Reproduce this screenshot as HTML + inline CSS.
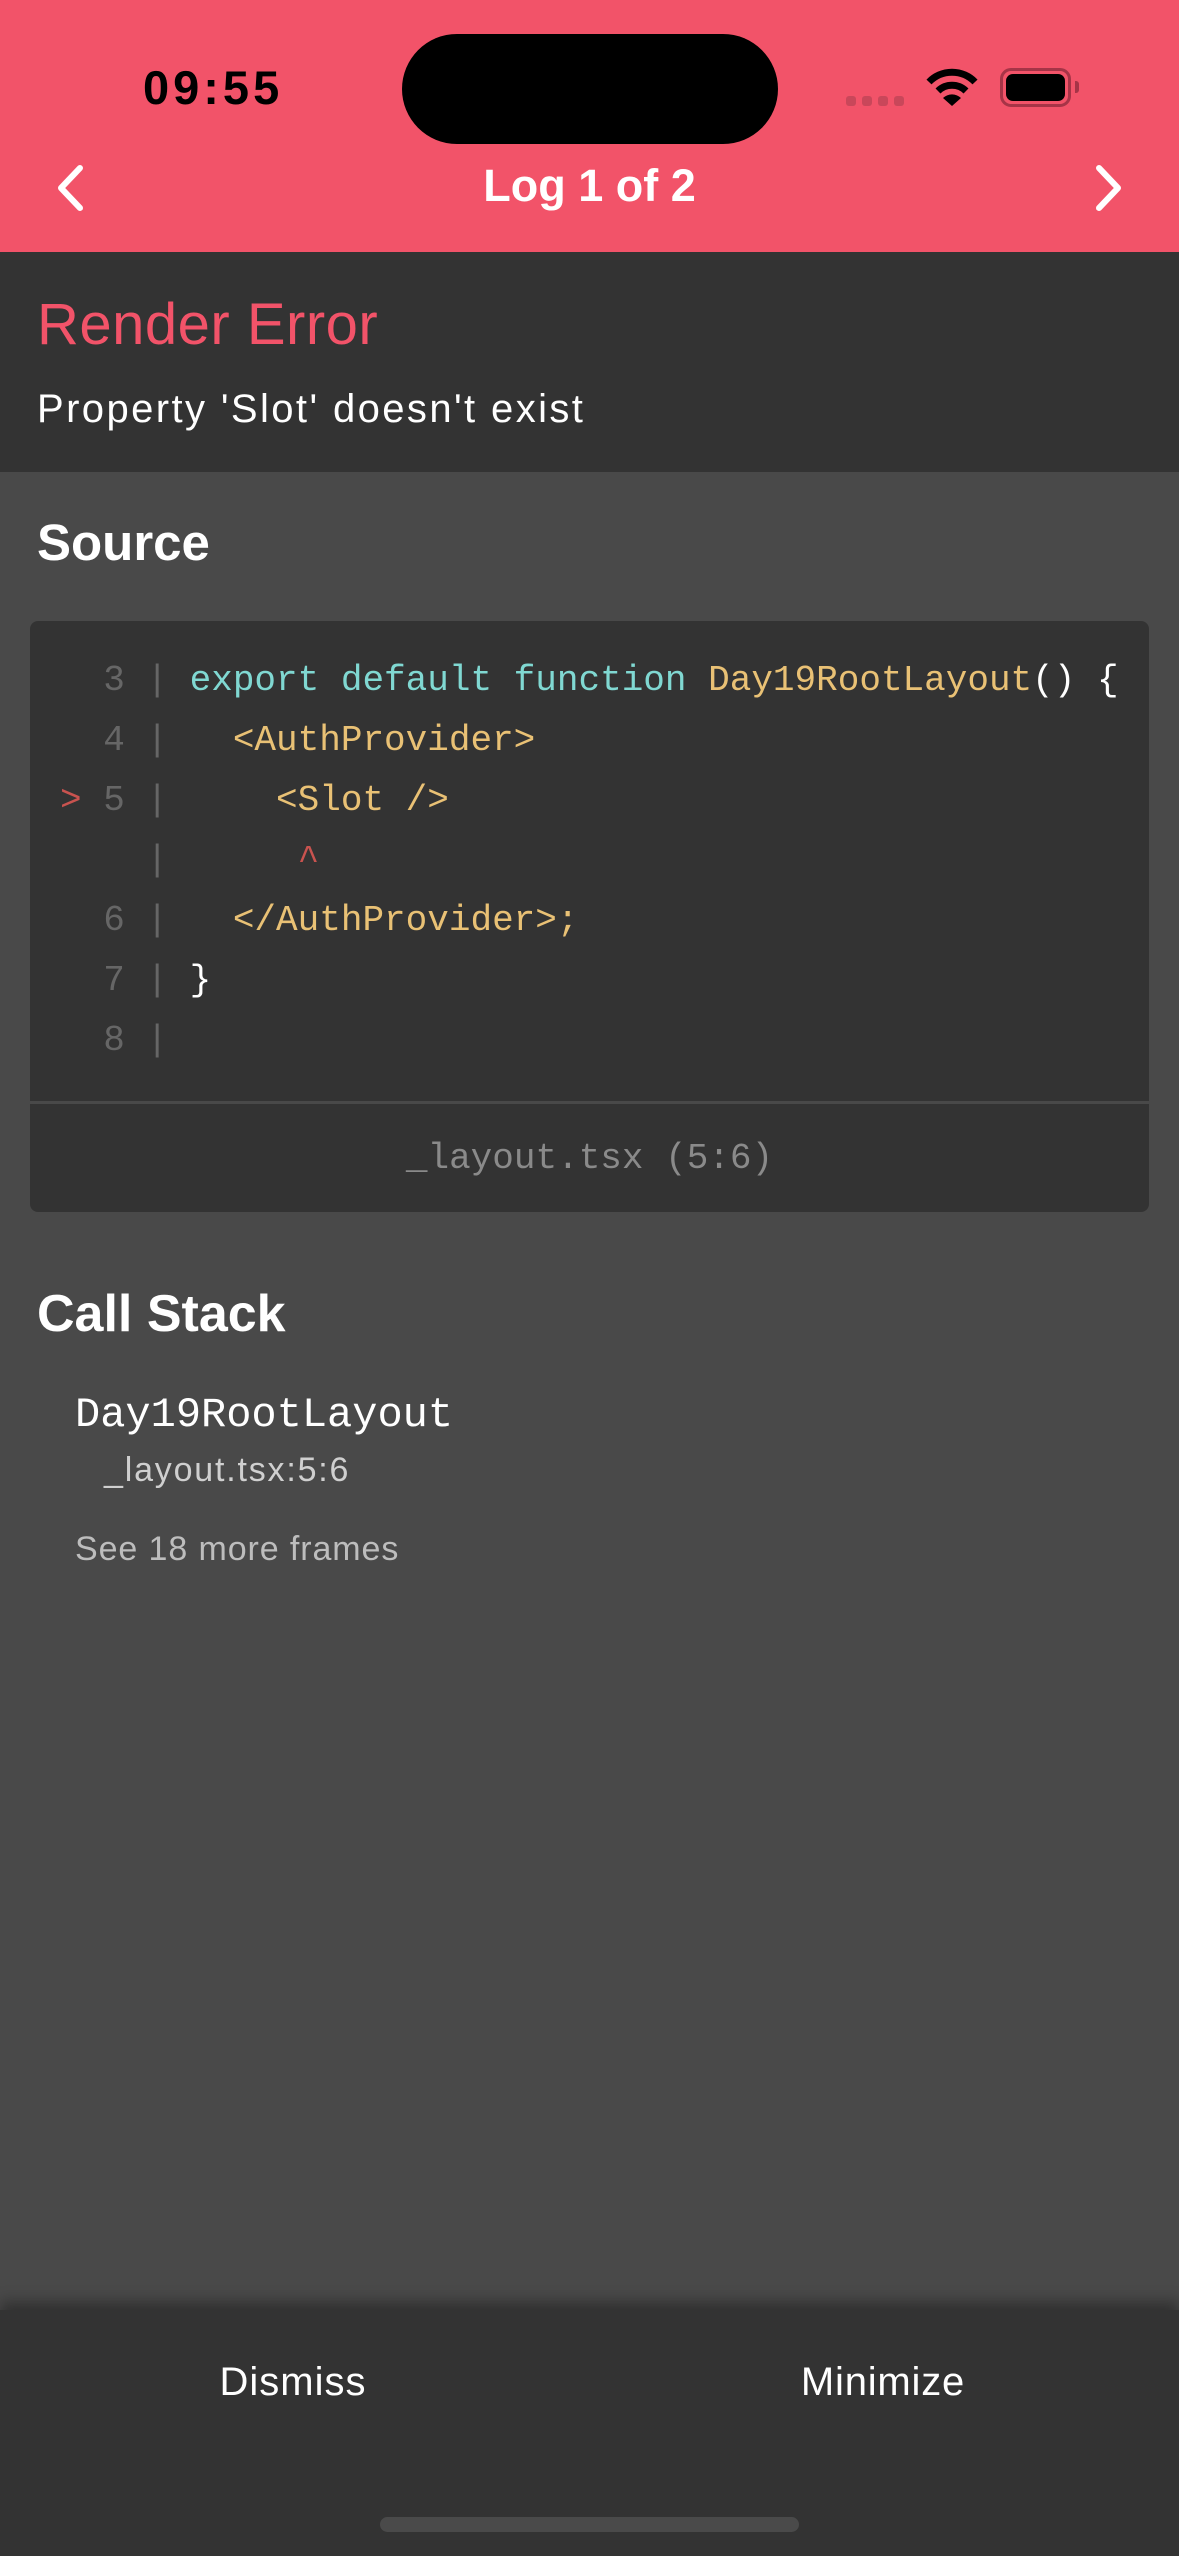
<!DOCTYPE html>
<html><head><meta charset="utf-8"><style>
*{margin:0;padding:0;box-sizing:border-box}
body{width:1179px;height:2556px;background:#494949;font-family:"Liberation Sans",sans-serif;position:relative;overflow:hidden;color:#fff}
.abs{position:absolute;white-space:pre}
.code{font-family:"Liberation Mono",monospace;font-size:36px;line-height:60px;position:absolute;left:60px;white-space:pre;color:#fff}
.g{color:#666}.c{color:#80d8d2}.y{color:#e9c175}.r{color:#c9534f}
</style></head><body>
<div style="position:absolute;left:0;top:0;width:1179px;height:252px;background:#f25369"></div>
<div class="abs" style="left:143px;top:60px;font-size:47px;font-weight:bold;color:#000;letter-spacing:4px">09:55</div>
<div style="position:absolute;left:402px;top:34px;width:376px;height:110px;border-radius:55px;background:#000"></div>
<div style="position:absolute;left:846px;top:96px;width:10px;height:10px;border-radius:3px;background:#c9475a"></div>
<div style="position:absolute;left:862px;top:96px;width:10px;height:10px;border-radius:3px;background:#c9475a"></div>
<div style="position:absolute;left:878px;top:96px;width:10px;height:10px;border-radius:3px;background:#c9475a"></div>
<div style="position:absolute;left:894px;top:96px;width:10px;height:10px;border-radius:3px;background:#c9475a"></div>
<svg style="position:absolute;left:926px;top:66px" width="52" height="42" viewBox="0 0 52 42">
<path d="M3 16 A32 32 0 0 1 49 16" stroke="#000" stroke-width="7" fill="none"/>
<path d="M12 25 A20 20 0 0 1 40 25" stroke="#000" stroke-width="7" fill="none"/>
<path d="M17 32 L26 40 L35 32 A13 13 0 0 0 17 32Z" fill="#000"/>
</svg>
<div style="position:absolute;left:1000px;top:68px;width:71px;height:39px;border-radius:11px;border:3px solid #a63447"></div>
<div style="position:absolute;left:1006px;top:74px;width:59px;height:27px;border-radius:7px;background:#000"></div>
<div style="position:absolute;left:1075px;top:81px;width:4px;height:12px;border-radius:0 3px 3px 0;background:#a63447"></div>
<svg style="position:absolute;left:0;top:150px" width="1179" height="80">
<path d="M80 18 L61 38 L80 58" stroke="#fff" stroke-width="6" fill="none" stroke-linecap="round" stroke-linejoin="round"/>
<path d="M1099 18 L1118 38 L1099 58" stroke="#fff" stroke-width="6" fill="none" stroke-linecap="round" stroke-linejoin="round"/>
</svg>
<div class="abs" style="left:0;width:1179px;text-align:center;top:160px;font-size:45px;font-weight:bold">Log 1 of 2</div>
<div style="position:absolute;left:0;top:252px;width:1179px;height:220px;background:#333"></div>
<div class="abs" style="left:37px;top:291px;font-size:58px;color:#f25369;letter-spacing:0.5px">Render Error</div>
<div class="abs" style="left:37px;top:387px;font-size:40px;letter-spacing:2.4px">Property 'Slot' doesn't exist</div>
<div class="abs" style="left:37px;top:513px;font-size:51px;font-weight:bold">Source</div>
<div style="position:absolute;left:30px;top:621px;width:1119px;height:591px;background:#333;border-radius:8px;overflow:hidden">
<div style="position:absolute;left:0;top:480px;width:1119px;height:3px;background:#494949"></div>
</div>
<div class="code" style="top:651px"><span class="g">  3 | </span><span class="c">export default function </span><span class="y">Day19RootLayout</span>() {
<span class="g">  4 | </span><span class="y">  &lt;AuthProvider&gt;</span>
<span class="r">&gt;</span><span class="g"> 5 | </span><span class="y">    &lt;Slot /&gt;</span>
<span class="g">    | </span><span class="r">     ^</span>
<span class="g">  6 | </span><span class="y">  &lt;/AuthProvider&gt;;</span>
<span class="g">  7 | </span>}
<span class="g">  8 | </span></div>
<div class="abs" style="left:30px;width:1119px;text-align:center;top:1138px;font-family:'Liberation Mono',monospace;font-size:36px;color:#8a8a8a">_layout.tsx (5:6)</div>
<div class="abs" style="left:37px;top:1284px;font-size:52px;font-weight:bold">Call Stack</div>
<div class="abs" style="left:75px;top:1391px;font-family:'Liberation Mono',monospace;font-size:42px">Day19RootLayout</div>
<div class="abs" style="left:104px;top:1451px;font-size:34px;color:#cfcfcf;letter-spacing:1.8px">_layout.tsx:5:6</div>
<div class="abs" style="left:75px;top:1530px;font-size:34px;color:#bdbdbd;letter-spacing:0.9px">See 18 more frames</div>
<div style="position:absolute;left:0;top:2310px;width:1179px;height:246px;background:#333;box-shadow:0 -8px 14px rgba(0,0,0,0.35)"></div>
<div class="abs" style="left:0;width:586px;text-align:center;top:2360px;font-size:40px;letter-spacing:1px">Dismiss</div>
<div class="abs" style="left:590px;width:586px;text-align:center;top:2360px;font-size:40px;letter-spacing:0.8px">Minimize</div>
<div style="position:absolute;left:380px;top:2517px;width:419px;height:15px;border-radius:8px;background:#4a4a4a"></div>
</body></html>
